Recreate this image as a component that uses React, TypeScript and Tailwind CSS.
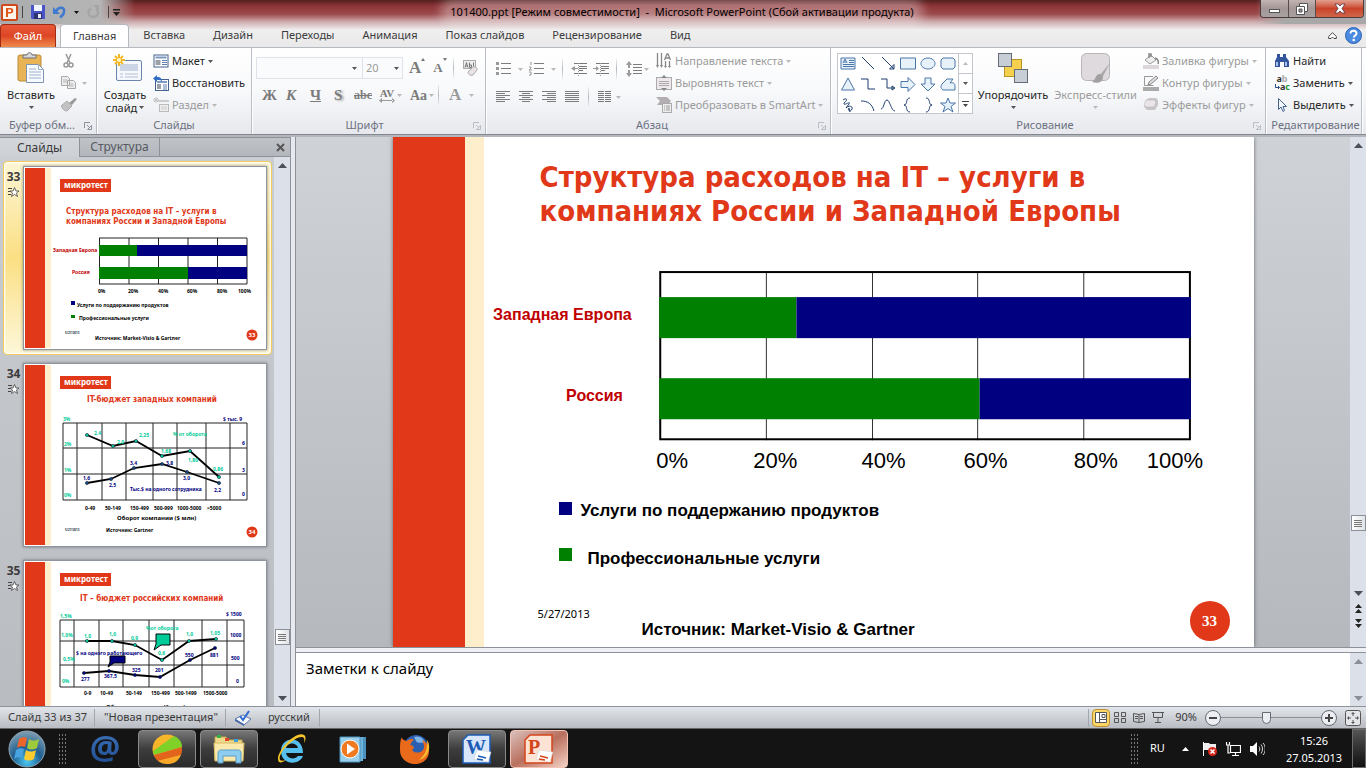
import React, { FC, ReactNode } from 'react'

interface IconProps {
  children: ReactNode
  w?: number
  h?: number
  className?: string
}

const Icon: FC<IconProps> = ({ children, w = 16, h = 16, className = '' }) => (
  <svg width={w} height={h} viewBox={`0 0 ${w} ${h}`} className={`shrink-0 ${className}`} aria-hidden="true">
    {children}
  </svg>
)

const Arrow: FC<{ dim?: boolean }> = ({ dim }) => (
  <Icon w={5} h={3}>
    <path d="M0 0h5L2.500 3z" fill={dim ? '#b9b9b9' : '#555'} />
  </Icon>
)

const Sep: FC = () => (
  <span className="h-5 w-px shrink-0 bg-linear-to-b from-[#eceef1] via-[#b4b8c0] to-[#eceef1]" />
)

/* ---------- title bar and tabs ---------- */

const TitleBar: FC = () => (
  <header className="flex h-6 items-start">
    <div className="flex h-6 items-center pl-px">
      <button aria-label="PowerPoint">
        <Icon w={17} h={17}>
          <rect x="1" y="1" width="15" height="15" rx="1" fill="#fff4ea" stroke="#cc4a1c" strokeWidth="2" />
          <path d="M5 13V4h4.500a2.500 2.500 0 0 1 0 5.500H7V13z" fill="#e0571b" />
          <path d="M7.200 5.500h1.800a1 1 0 0 1 0 2.500H7.200z" fill="#fff" />
        </Icon>
      </button>
      <span className="mr-2 ml-1 h-3 w-px bg-[#444]" />
      <button aria-label="Сохранить">
        <Icon w={14} h={14}>
          <path d="M0 0h14v14H1l-1-1z" fill="#4a52c8" />
          <rect x="3" y="0" width="8" height="6" fill="#f2f5ff" />
          <rect x="3" y="8" width="8" height="6" fill="#2c3170" />
          <rect x="7" y="9" width="3" height="4" fill="#e8ebf8" />
        </Icon>
      </button>
      <button aria-label="Отменить" className="ml-2 flex items-center gap-2">
        <Icon w={13} h={14}>
          <path d="M3 6C6 1 12 2 11 7c-.3 2.500-2 4-4 5.500" fill="none" stroke="#3f7ad0" strokeWidth="2.500" />
          <path d="M0 2v7h7z" fill="#3f7ad0" />
        </Icon>
        <Icon w={5} h={3}>
          <path d="M0 0h5L2.500 3z" fill="#111" />
        </Icon>
      </button>
      <button aria-label="Повторить" className="ml-2">
        <Icon w={13} h={14}>
          <path d="M4 3C0 6 1 12 6 12s7-5 3-8" fill="none" stroke="#a5a5a5" strokeWidth="2.500" />
          <path d="M6 0h6v6z" fill="#a5a5a5" />
        </Icon>
      </button>
      <span className="mr-1 ml-2 h-3 w-px bg-[#444]" />
      <button aria-label="Настройка панели">
        <Icon w={7} h={7}>
          <path d="M0 0h7v1.500H0zM0 3h7L3.500 7z" fill="#222" />
        </Icon>
      </button>
    </div>
    <h1 className="flex h-6 flex-1 items-center justify-center pr-4 text-[11px] text-black">
      <span className="rounded-full bg-white/30 px-1 leading-4 shadow-[0_0_10px_6px_rgba(255,255,255,0.3)]">
        101400.ppt [Режим совместимости]&nbsp; - &nbsp;Microsoft PowerPoint (Сбой активации продукта)
      </span>
    </h1>
    <div className="mr-0.5 flex h-[18px] overflow-hidden rounded-b border border-t-0 border-[#4b3b3b]">
      <button aria-label="Свернуть" className="flex w-7 items-center justify-center border-r border-[#5a4a4a] bg-linear-to-b from-[#c4b4b4] via-[#a59797] to-[#a7a1a1]">
        <Icon w={11} h={10}>
          <rect x="0.500" y="5.500" width="10" height="3" fill="#fff" stroke="#555" />
        </Icon>
      </button>
      <button aria-label="Восстановить окно" className="flex w-[27px] items-center justify-center border-r border-[#5a4a4a] bg-linear-to-b from-[#c4b4b4] via-[#a59797] to-[#a7a1a1]">
        <Icon w={12} h={12}>
          <path d="M3.500.5h8v8h-8z" fill="#fff" stroke="#555" />
          <path d="M.5 3.500h8v8h-8z" fill="#fff" stroke="#555" />
          <path d="M3 6h3v3H3z" fill="#a09494" stroke="#555" />
        </Icon>
      </button>
      <button aria-label="Закрыть" className="flex w-[47px] items-center justify-center bg-linear-to-b from-[#e0a08e] via-[#c8432a] to-[#d0664a]">
        <Icon w={12} h={11}>
          <path d="M1 1h3l2 2 2-2h3L8 5.500l3 4.500H8L6 8l-2 2H1l3-4.500z" fill="#fff" stroke="#534" strokeWidth="0.800" />
        </Icon>
      </button>
    </div>
  </header>
)

const TABS = ['Вставка', 'Дизайн', 'Переходы', 'Анимация', 'Показ слайдов', 'Рецензирование', 'Вид']

const RibbonTabs: FC = () => (
  <nav className="flex h-[23px] items-stretch text-[11px] text-[#3c3c3c]">
    <button className="mr-1 w-14 rounded-t border border-b-0 border-[#a02a12] bg-linear-to-b from-[#e8593a] via-[#dc4524] to-[#f08a4c] text-white">Файл</button>
    <button className="rounded-t-sm border border-b-0 border-[#b5b9c0] bg-white px-3">Главная</button>
    {TABS.map((tab) => (
      <button key={tab} className="px-[14px]">
        {tab}
      </button>
    ))}
    <div className="ml-auto flex items-center gap-2 pr-1">
      <button aria-label="Свернуть ленту">
        <Icon w={9} h={8}>
          <path d="M4.500.7 8.300 4.500v2H6L4.500 5 3 6.500H.7v-2z" fill="#fff" stroke="#444" />
        </Icon>
      </button>
      <button aria-label="Справка">
        <Icon w={17} h={17}>
          <circle cx="8.500" cy="8.500" r="8" fill="#4a8ae0" stroke="#2a62b4" />
          <path d="M5.500 6.500c0-4 6.200-3.600 6 0 0 2-2.700 2-2.700 4" fill="none" stroke="#fff" strokeWidth="2" />
          <circle cx="8.700" cy="13" r="1.300" fill="#fff" />
        </Icon>
      </button>
    </div>
  </nav>
)

/* ---------- ribbon ---------- */

interface GroupProps {
  label: string
  launcher?: 'on' | 'dim'
  className: string
  children: ReactNode
}

const Group: FC<GroupProps> = ({ label, launcher, className, children }) => (
  <section className={`flex flex-col border-r border-[#b9bdc5] shadow-[1px_0_0_#fff] ${className}`}>
    <div className="flex h-[69px] pt-0.5">{children}</div>
    <div className="flex h-[17px] items-center text-[11px] text-[#6c7180]">
      <span className="flex-1 text-center whitespace-nowrap">{label}</span>
      {launcher && (
        <button aria-label={`${label}: параметры`} className="mr-1">
          <Icon w={8} h={8} className={launcher === 'dim' ? 'opacity-50' : ''}>
            <path d="M.5 6V.5H6M3 3l3 3M7.500 3.500v4h-4z" fill="none" stroke="#8a8f99" />
          </Icon>
        </button>
      )}
    </div>
  </section>
)

interface CommandProps {
  icon: ReactNode
  label: string
  dim?: boolean
  arrow?: boolean
}

const Command: FC<CommandProps> = ({ icon, label, dim, arrow }) => (
  <button className={`flex h-[22px] items-center gap-[3px] text-[11px] whitespace-nowrap ${dim ? 'text-[#9b9b9b]' : 'text-[#262626]'}`}>
    {icon}
    {label}
    {arrow && <Arrow dim={dim} />}
  </button>
)

const Clipboard: FC = () => (
  <Group label="Буфер обм..." launcher="on" className="w-[97px]">
    <button className="flex w-[58px] flex-col items-center justify-start pl-1 text-[11px] text-[#262626]">
      <Icon w={30} h={32} className="mt-0.5 mb-[3px]">
        <rect x="2" y="3" width="23" height="26" rx="2" fill="#e8b456" stroke="#b98a36" />
        <path d="M7 6V3h4c0-3 5-3 5 0h4v3z" fill="#d5d8dc" stroke="#6c7075" />
        <path d="M10.500 12.500h12l5 5v13h-17z" fill="#f7faff" stroke="#7f93b5" />
        <path d="M22.500 12.500v5h5M13 17h7M13 20h12M13 23h12M13 26h12" fill="none" stroke="#9fb0cc" />
      </Icon>
      <span className="leading-4">Вставить</span>
      <span className="flex h-2 items-center">
        <Arrow />
      </span>
    </button>
    <div className="flex flex-col">
      <button aria-label="Вырезать" className="flex h-[22px] items-center pl-1">
        <Icon w={14}>
          <path d="M4 1l4 9M9 1L5 10" stroke="#999" strokeWidth="1.500" fill="none" />
          <circle cx="4" cy="12" r="2" fill="none" stroke="#999" strokeWidth="1.500" />
          <circle cx="9" cy="12" r="2" fill="none" stroke="#999" strokeWidth="1.500" />
        </Icon>
      </button>
      <button aria-label="Копировать" className="flex h-[22px] items-center gap-[5px] pl-[3px]">
        <Icon>
          <path d="M.5 1.500h6l2 2v7h-8zM6.500 5.500h6l2 2v6h-8z" fill="#eee" stroke="#a9a9a9" />
          <path d="M2 5h4M2 7h4M8.500 9h4M8.500 11h4" stroke="#b5b5b5" />
        </Icon>
        <Arrow dim />
      </button>
      <button aria-label="Формат по образцу" className="flex h-[22px] items-center pl-[3px]">
        <Icon>
          <path d="M0 9l6-5 5 5-5 5c-2 0-4-1-6-5z" fill="#c2c2c2" stroke="#aaa" />
          <path d="M8 6l6-5 2 1-5 6z" fill="#999" />
        </Icon>
      </button>
    </div>
  </Group>
)

const LayoutIcon: FC = () => (
  <Icon w={16} h={14}>
    <rect x="1" y="1" width="14" height="12" fill="#fff" stroke="#45618c" />
    <rect x="2.500" y="2.500" width="11" height="2" fill="#7d9ac4" />
    <rect x="2.500" y="6" width="5" height="5" fill="#9a9fa8" />
    <path d="M9 6.500h5M9 8.500h5M9 10.500h5" stroke="#5f7fb2" />
  </Icon>
)

const Slides: FC = () => (
  <Group label="Слайды" className="w-[155px]">
    <button className="flex w-[56px] flex-col items-center justify-start text-[11px] text-[#262626]">
      <Icon w={32} h={32} className="mt-0.5 mb-1 ml-1">
        <rect x="5.500" y="8.500" width="25" height="20" rx="1.500" fill="#f4f7fc" stroke="#6d84ac" />
        <rect x="9" y="12" width="18" height="7" fill="#ccd5e6" />
        <path d="M9 22h3M14 22h13M9 25h3M14 25h13" stroke="#b6c0d2" />
        <path d="M8 2v12M2 8h12M4 4l8 8M12 4l-8 8" stroke="#f3b724" strokeWidth="2" />
        <circle cx="8" cy="8" r="2" fill="#fff6c8" />
      </Icon>
      <span className="leading-[13px]">Создать</span>
      <span className="flex items-center gap-0.5 leading-[13px]">
        слайд <Arrow />
      </span>
    </button>
    <div className="flex flex-col">
      <Command icon={<LayoutIcon />} label="Макет" arrow />
      <Command
        icon={
          <Icon>
            <rect x="2.500" y="4.500" width="13" height="11" fill="#fff" stroke="#45618c" />
            <path d="M4 7h10" stroke="#7d9ac4" strokeWidth="2" />
            <rect x="4" y="9" width="4" height="5" fill="#9a9fa8" />
            <path d="M10 10h4M10 12h4M10 14h4" stroke="#5f7fb2" />
            <path d="M0 3.500L4 0v2c4 0 5 2 5 5C8 5 7 5 4 5v2z" fill="#2f6cc4" />
          </Icon>
        }
        label="Восстановить"
      />
      <Command
        icon={
          <Icon>
            <rect x="6.500" y="7.500" width="9" height="7" fill="#eee" stroke="#bbb" />
            <rect x="5" y="3" width="11" height="2" fill="#ccc" />
            <path d="M8 10h6M8 12h6" stroke="#ccc" />
            <path d="M3 0v6M0 3h6M1 1l4 4M5 1L1 5" stroke="#c4c4c4" />
          </Icon>
        }
        label="Раздел"
        dim
        arrow
      />
    </div>
  </Group>
)

const FONT_BTN = 'flex h-6 items-center font-["Liberation_Serif",serif] font-bold text-[#7b7b7b]'

const FontGroup: FC = () => (
  <Group label="Шрифт" launcher="dim" className="w-[234px] pl-1">
    <div className="flex flex-col gap-1 pt-[7px]">
      <div className="flex items-center">
        <label className="grid w-[107px] items-center">
          <select aria-label="Шрифт" className="col-start-1 row-start-1 h-[22px] appearance-none border border-[#dfe2e8] bg-[#fafbfc]" />
          <span className="col-start-1 row-start-1 mr-1.5 justify-self-end">
            <Arrow />
          </span>
        </label>
        <label className="grid w-10 items-center">
          <select aria-label="Размер шрифта" className="col-start-1 row-start-1 h-[22px] appearance-none border border-l-0 border-[#dfe2e8] bg-[#fafbfc] pl-[3px] text-[11px] text-[#9b9b9b]">
            <option>20</option>
          </select>
          <span className="col-start-1 row-start-1 mr-1 justify-self-end">
            <Arrow />
          </span>
        </label>
        <button aria-label="Увеличить размер шрифта" className='ml-[6px] flex items-start font-["Liberation_Serif",serif] text-[17px] leading-5 font-bold text-[#7b7b7b]'>
          A
          <Icon w={4} h={4}>
            <path d="M0 3h4L2 0z" fill="#777" />
          </Icon>
        </button>
        <button aria-label="Уменьшить размер шрифта" className='ml-2 flex items-start font-["Liberation_Serif",serif] text-[13px] leading-5 font-bold text-[#7b7b7b]'>
          A
          <Icon w={4} h={4}>
            <path d="M0 0h4L2 3z" fill="#777" />
          </Icon>
        </button>
        <span className="w-1.5" />
        <Sep />
        <button aria-label="Очистить форматирование" className="ml-2">
          <Icon>
            <rect x="1.500" y=".5" width="12" height="8" fill="#eee" stroke="#aaa" />
            <path d="M3 7.500l1.500-5 1.500 5M3.500 6h2M7.500 2.500v5h2v-2.500h-2M11.500 2.500v5" fill="none" stroke="#777" />
            <path d="M6 12l5-5c2-1 5 1 4 3l-4 5c-3 1-5-1-5-3z" fill="#e9e2e6" stroke="#aaa" />
          </Icon>
        </button>
      </div>
      <div className="flex items-center pl-[6px]">
        <button className={`${FONT_BTN} w-6 text-[15px]`}>Ж</button>
        <button className={`${FONT_BTN} w-6 text-[15px] italic`}>К</button>
        <button className={`${FONT_BTN} w-6 text-[15px] underline`}>Ч</button>
        <button className={`${FONT_BTN} w-5 text-[15px] [text-shadow:2px_1px_2px_#aaa]`}>S</button>
        <button className={`${FONT_BTN} w-[25px] text-[12px] line-through`}>abc</button>
        <button aria-label="Межзнаковый интервал" className={`${FONT_BTN} w-[31px] gap-0.5`}>
          <span className="flex flex-col items-center text-[11px] leading-[10px]">
            AV
            <Icon h={5}>
              <path d="M0 2.500L3 0v5zM16 2.500L13 0v5zM2 2h12v1H2z" fill="#999" />
            </Icon>
          </span>
          <Arrow dim />
        </button>
        <button className={`${FONT_BTN} w-7 gap-0.5 text-[14px]`}>
          Aa <Arrow dim />
        </button>
        <Sep />
        <button className={`${FONT_BTN} ml-[10px] gap-2 text-[17px] text-[#999]`}>
          A <Arrow dim />
        </button>
      </div>
    </div>
  </Group>
)

const Align: FC<{ d: string; label: string }> = ({ d, label }) => (
  <button aria-label={label} className="mr-[9px] flex h-6 items-center">
    <Icon w={14} h={12}>
      <path d={d} stroke="#7d7d7d" />
    </Icon>
  </button>
)

const Indent: FC<{ label: string; d: string }> = ({ label, d }) => (
  <button aria-label={label}>
    <Icon h={13}>
      <path d="M3 .5h13M8 3.500h8M8 5.500h8M8 7.500h4M3 10.500h13" stroke="#777" />
      <path d="M7.500 0v13" stroke="#999" strokeDasharray="1 1" />
      <path d={d} fill="#999" />
    </Icon>
  </button>
)

const Paragraph: FC = () => (
  <Group label="Абзац" launcher="dim" className="w-[345px]">
    <div className="flex w-[170px] flex-col gap-1 pt-[7px] pl-[10px]">
      <div className="flex h-6 items-center">
        <button aria-label="Маркеры" className="flex w-[33px] items-center gap-[6px]">
          <Icon h={14}>
            <path d="M5 1.500h10M5 6.500h10M5 11.500h10" stroke="#7d7d7d" />
            <path d="M0 0h3v3H0zM0 5h3v3H0zM0 10h3v3H0z" fill="#999" />
          </Icon>
          <Arrow dim />
        </button>
        <button aria-label="Нумерация" className="flex w-[33px] items-center gap-[6px]">
          <Icon h={14}>
            <path d="M5 1.500h10M5 6.500h10M5 11.500h10" stroke="#7d7d7d" />
            <path d="M1 0h1v3M0 5h2v1L0 8h3M0 10h2v3H0" stroke="#999" fill="none" />
          </Icon>
          <Arrow dim />
        </button>
        <Sep />
        <div className="flex w-[53px] justify-center gap-[6px]">
          <Indent label="Уменьшить уровень" d="M0 5.500L4 3v2h3v1H4v2z" />
          <Indent label="Увеличить уровень" d="M6 5.500L3 3v2H0v1h3v2z" />
        </div>
        <Sep />
        <button aria-label="Междустрочный интервал" className="ml-[9px] flex items-center gap-0.5">
          <Icon>
            <path d="M3 0l3 4H4v3H2V4H0zM3 16l3-4H4V9H2v3H0z" fill="#999" />
            <path d="M7 3.500h9M7 6.500h9M7 9.500h9M7 12.500h9" stroke="#7d7d7d" />
          </Icon>
          <Arrow dim />
        </button>
      </div>
      <div className="flex items-center">
        <Align label="По левому краю" d="M0 .5h14M0 2.500h9M0 4.500h14M0 6.500h9M0 8.500h14M0 10.500h9" />
        <Align label="По центру" d="M0 .5h14M3 2.500h8M0 4.500h14M3 6.500h8M0 8.500h14M3 10.500h8" />
        <Align label="По правому краю" d="M0 .5h14M5 2.500h9M0 4.500h14M5 6.500h9M0 8.500h14M5 10.500h9" />
        <Align label="По ширине" d="M0 .5h14M0 2.500h14M0 4.500h14M0 6.500h14M0 8.500h14M0 10.500h14" />
        <Sep />
        <button aria-label="Колонки" className="ml-[9px] flex items-center gap-[5px]">
          <Icon w={13} h={12}>
            <path d="M0 .5h6M0 2.500h6M0 4.500h6M0 6.500h6M0 8.500h6M0 10.500h6M7 .5h6M7 2.500h6M7 4.500h6M7 6.500h6M7 8.500h6M7 10.500h6" stroke="#777" />
          </Icon>
          <Arrow dim />
        </button>
      </div>
    </div>
    <div className="flex flex-col">
      <Command
        icon={
          <Icon>
            <path d="M1.500 0v13M5.500 0v13M9.500 8v6M13.500 8v6" stroke="#888" strokeWidth="1.300" />
            <path d="M0 12h3l-1.500 3zM4 12h3l-1.500 3zM8 13h3l-1.500 2zM12 13h3l-1.500 2z" fill="#888" />
            <path d="M8.500 7l2.500-6h1l2.500 6M9.500 5h4" stroke="#888" fill="none" strokeWidth="1.300" />
          </Icon>
        }
        label="Направление текста"
        dim
        arrow
      />
      <Command
        icon={
          <Icon>
            <rect x=".5" y="2.500" width="15" height="12" fill="#eee7ec" stroke="#aaa" />
            <path d="M3 6.500h10M3 8.500h10M3 10.500h10" stroke="#aaa" />
            <path d="M8 0l3 3H5zM8 16l3-3H5z" fill="#888" />
          </Icon>
        }
        label="Выровнять текст"
        dim
        arrow
      />
      <Command
        icon={
          <Icon>
            <path d="M0 0h11l4 4-3 4H1l3-4z" fill="#b3aeb2" />
            <rect x="6.500" y="6.500" width="9" height="9" fill="#eee" stroke="#aaa" />
            <path d="M8 9h1M10 9h4M8 11h1M10 11h4M8 13h1M10 13h4" stroke="#999" />
          </Icon>
        }
        label="Преобразовать в SmartArt"
        dim
        arrow
      />
    </div>
  </Group>
)

const SHAPES: { name: string; d: string; filled?: boolean }[] = [
  { name: 'Надпись', d: 'M1 3h14v11H1zM9 5.500h5M9 7.500h5M3 9.500h11M3 11.500h11M3 8l2-4 2 4M4 7h2', filled: true },
  { name: 'Линия', d: 'M2 2l12 12' },
  { name: 'Стрелка', d: 'M2 2l12 12M14 9.500V14H9.500z' },
  { name: 'Прямоугольник', d: 'M.5 3h15v11H.5z', filled: true },
  { name: 'Овал', d: 'M8 3c4 0 7 2.500 7 5.500S12 14 8 14s-7-2.500-7-5.500S4 3 8 3z', filled: true },
  { name: 'Скругленный прямоугольник', d: 'M3 3h10l2 2v7l-2 2H3l-2-2V5z', filled: true },
  { name: 'Треугольник', d: 'M8 2l6.500 12h-13z', filled: true },
  { name: 'Соединитель', d: 'M1 3h7v10h7' },
  { name: 'Соединитель со стрелкой', d: 'M1 3h6v9h7M12 10l3 2-3 2z' },
  { name: 'Стрелка вправо', d: 'M1 5.500h7v-4L15 8.500l-7 7v-4H1z', filled: true },
  { name: 'Стрелка вниз', d: 'M5 2h6v6h4l-7 7-7-7h4z', filled: true },
  { name: 'Полилиния', d: 'M2 8l5-5h6l-3 4c4-1 5 1 5 3v4H3c-3-2-2-4-1-6z', filled: true },
  { name: 'Кривая', d: 'M3 3c4-3 5 0 1 3-1 4 7-3 5 1l-3 4c3-3 7-2 6 1s-5 2-3-1l1 4' },
  { name: 'Дуга', d: 'M1 4c7 0 11 3 13 10' },
  { name: 'Линия кривая', d: 'M1 12C4 12 4 3 7 3s4 11 8 11' },
  { name: 'Левая фигурная скобка', d: 'M10 1C5 1 8 8 4 8c4 0 1 7 6 7' },
  { name: 'Правая фигурная скобка', d: 'M6 1c5 0 2 7 6 7-4 0-1 7-6 7' },
  { name: 'Звезда', d: 'M8 1l2 5h5.500l-4.500 3.500 2 5.500-5-3.500L3 15l2-5.500L.5 6H6z', filled: true },
]

const Drawing: FC = () => (
  <Group label="Рисование" launcher="dim" className="flex-1 pl-[6px]">
    <div className="mt-[3px] flex h-[61px] shrink-0 border border-[#c3c6cd] bg-white">
      <div className="grid grid-cols-6 gap-x-1 gap-y-1 px-0.5 pt-px">
        {SHAPES.map((shape) => (
          <button key={shape.name} aria-label={shape.name}>
            <Icon>
              <path d={shape.d} fill={shape.filled ? '#e6f1fa' : 'none'} stroke={shape.filled ? '#4a76a8' : '#1f3d70'} />
            </Icon>
          </button>
        ))}
      </div>
      <div className="flex w-[14px] flex-col border-l border-[#c3c6cd]">
        <button aria-label="Вверх" className="flex flex-1 items-center justify-center">
          <Icon w={5} h={3}>
            <path d="M0 3h5L2.500 0z" fill="#bbb" />
          </Icon>
        </button>
        <button aria-label="Вниз" className="flex flex-1 items-center justify-center border-y border-[#c3c6cd]">
          <Arrow />
        </button>
        <button aria-label="Все фигуры" className="flex flex-1 items-center justify-center">
          <Icon w={7} h={6}>
            <path d="M0 0h7v1H0zM1 3h5L3.500 6z" fill="#444" />
          </Icon>
        </button>
      </div>
    </div>
    <button className="flex w-20 shrink-0 flex-col items-center justify-start text-[11px] text-[#262626]">
      <Icon w={32} h={32} className="mt-0.5 mb-[3px]">
        <rect x="7.500" y="7.500" width="17" height="17" fill="#f5cf4e" stroke="#b99429" />
        <rect x="1.500" y="1.500" width="13" height="13" fill="#c8ced6" stroke="#666c75" />
        <rect x="17.500" y="17.500" width="13" height="13" fill="#c8ced6" stroke="#666c75" />
      </Icon>
      <span className="leading-4">Упорядочить</span>
      <span className="flex h-2 items-center">
        <Arrow />
      </span>
    </button>
    <button className="flex w-[85px] shrink-0 flex-col items-center justify-start text-[11px] text-[#9b9b9b]">
      <Icon w={32} h={32} className="mt-0.5 mb-[3px]">
        <rect x="1.500" y="1.500" width="28" height="27" rx="5" fill="#dfdade" stroke="#b9b4b8" />
        <path d="M30 11L19 24l3 2z" fill="#aaa" />
        <path d="M20 22c-5 0-4 6-8 8 6 2 11 0 11-5z" fill="#a3a0a2" />
      </Icon>
      <span className="leading-4">Экспресс-стили</span>
      <span className="flex h-2 items-center">
        <Arrow dim />
      </span>
    </button>
    <div className="ml-[5px] flex flex-col">
      <Command
        icon={
          <Icon>
            <rect x="0" y="12" width="16" height="4" fill="#ddd6dc" />
            <path d="M2 7l6-5 5 5-6 4z" fill="#eee" stroke="#999" />
            <path d="M6 5V1h2v3M12 5c3 1 4 3 3 6" fill="none" stroke="#888" strokeWidth="1.500" />
          </Icon>
        }
        label="Заливка фигуры"
        dim
        arrow
      />
      <Command
        icon={
          <Icon>
            <rect x="0" y="12" width="16" height="4" fill="#aaa" />
            <path d="M10 1.500H1.500v9h9" fill="none" stroke="#999" />
            <path d="M5 10l1-3 7-6 2 2-7 6z" fill="#ddd" stroke="#888" />
          </Icon>
        }
        label="Контур фигуры"
        dim
        arrow
      />
      <Command
        icon={
          <Icon>
            <path d="M3 3l3-2h7l2 2v5l-3 5H4l-3-3z" fill="#c9c5c8" />
            <path d="M3 3h8l2 2-2 5H3L1 8z" fill="#e9e5e8" stroke="#bbb" strokeWidth=".6" />
          </Icon>
        }
        label="Эффекты фигур"
        dim
        arrow
      />
    </div>
  </Group>
)

const Editing: FC = () => (
  <Group label="Редактирование" className="mr-1 w-24 pl-1">
    <div className="flex flex-col pl-1">
      <Command
        icon={
          <Icon>
            <path d="M3 1h3v3h3V1h3v3l3 4v6h-5V9H6v5H1V8l2-4z" fill="#32559c" />
            <path d="M2 9h2v4H2zM11 9h2v4h-2z" fill="#a9c0e8" />
          </Icon>
        }
        label="Найти"
      />
      <Command
        icon={
          <span className="flex w-4 shrink-0 flex-col text-[9px] leading-2 font-bold">
            <span className="text-[#333]">
              a<span className="text-[#aaa]">b</span>
            </span>
            <span className="flex items-center justify-end text-[#333]">
              <Icon w={5} h={6}>
                <path d="M.5 0v3.500h4M3 2l1.500 1.500L3 5" stroke="#2b4b86" fill="none" />
              </Icon>
              a<span className="text-[#1f9b2d]">c</span>
            </span>
          </span>
        }
        label="Заменить"
        arrow
      />
      <Command
        icon={
          <Icon>
            <path d="M4.500 1.500v11L7 10l2 4.500 1.500-1L9 9.500h3.500z" fill="#f4f8ff" stroke="#47648f" />
          </Icon>
        }
        label="Выделить"
        arrow
      />
    </div>
  </Group>
)

/* ---------- thumbnails ---------- */

const THUMB_TITLE = 'font-["DejaVu_Sans_Condensed","DejaVu_Sans",sans-serif]'

const ThumbFrame: FC<{ n: number; children: ReactNode }> = ({ n, children }) => (
  <svg viewBox="0 0 242 182" className="block w-full font-['Noto_Sans',sans-serif]" role="img" aria-label={`Слайд ${n}`}>
    <rect width="242" height="182" fill="#fff" />
    <rect x="1" y="1" width="20" height="180" fill="#e03818" />
    <rect x="21" y="1" width="6" height="180" fill="#feeecb" />
    <rect x="36" y="12" width="51" height="13" fill="#e03818" />
    <text x="40" y="21" fontSize="8" fontWeight="bold" fill="#fff">микротест</text>
    {children}
    <text x="41" y="167" fontSize="3" fontWeight="bold" fill="#234">5/27/2013</text>
    <circle cx="228" cy="168" r="5.500" fill="#e03818" />
    <text x="228" y="170" fontSize="6" fontWeight="bold" fill="#fff" textAnchor="middle">{n}</text>
  </svg>
)

type Label = [x: number, y: number, text: string]
type Point = [x: number, y: number]

const Labels: FC<{ items: Label[]; fill: string }> = ({ items, fill }) => (
  <g fontSize="5" fontWeight="bold" fill={fill}>
    {items.map(([x, y, text]) => (
      <text key={`${x}-${y}`} x={x} y={y}>
        {text}
      </text>
    ))}
  </g>
)

const Line: FC<{ points: Point[]; fill: string }> = ({ points, fill }) => (
  <g>
    <polyline points={points.map((p) => p.join(',')).join(' ')} fill="none" stroke="#000" strokeWidth="1.800" />
    {points.map(([x, y]) => (
      <circle key={x} cx={x} cy={y} r="1.600" fill={fill} stroke="#123" strokeWidth=".6" />
    ))}
  </g>
)

const GREEN = '#00cc99'
const NAVY = '#000080'

const Thumb33: FC = () => (
  <ThumbFrame n={33}>
    <g fontSize="8" fontWeight="bold" fill="#e03818" className={THUMB_TITLE}>
      <text x="42" y="47">Структура расходов на IT – услуги в</text>
      <text x="42" y="57">компаниях России и Западной Европы</text>
    </g>
    <path d="M75.500 71v46M105 71v46M134.500 71v46M164 71v46M193.500 71v46M223 71v46M75 71h148M75 117h148" stroke="#222" />
    <path d="M75 78h38v11H75zM75 100h89v12H75z" fill="#008000" />
    <path d="M113 78h110v11H113zM164 100h59v12h-59z" fill={NAVY} />
    <Labels fill="#c00000" items={[[29, 85, 'Западная Европа'], [48, 107, 'Россия']]} />
    <Labels fill="#000" items={[[74, 126, '0%'], [104, 126, '20%'], [134, 126, '40%'], [163, 126, '60%'], [193, 126, '80%'], [214, 126, '100%'], [53, 140, 'Услуги по поддержанию продуктов'], [55, 153, 'Профессиональные услуги'], [71, 173, 'Источник: Market-Visio & Gartner']]} />
    <rect x="47" y="134" width="4" height="4" fill={NAVY} />
    <rect x="47" y="148" width="4" height="3" fill="#008000" />
  </ThumbFrame>
)

const Thumb34: FC = () => (
  <ThumbFrame n={34}>
    <text x="63" y="38" fontSize="8" fontWeight="bold" fill="#e03818" className={THUMB_TITLE}>IT-бюджет западных компаний</text>
    <path d="M39 59h184M39 84h184M39 110h184M39 136h184M39 59v77M53 59v77M78 59v77M102 59v77M129 59v77M153 59v77M182 59v77M206 59v77M223 59v77" stroke="#222" />
    <Line fill={GREEN} points={[[63, 71], [89, 82], [112, 77], [138, 92], [166, 87], [195, 113]]} />
    <Line fill="#1b4a80" points={[[63, 119], [87, 115], [110, 104], [138, 100], [163, 108], [195, 119]]} />
    <Labels fill={GREEN} items={[[39, 57, '3%'], [40, 82, '2%'], [40, 108, '1%'], [40, 133, '0%'], [70, 71, '2,4'], [93, 80, '2,0'], [115, 73, '2,25'], [137, 89, '1,68'], [164, 98, '1,80'], [189, 107, '0,86'], [149, 72, '% от оборота']]} />
    <Labels fill={NAVY} items={[[199, 57, '$ тыс. 9'], [218, 81, '6'], [218, 108, '3'], [218, 132, '0'], [59, 116, '1,6'], [85, 123, '2,5'], [106, 101, '3,4'], [142, 101, '3,8'], [159, 116, '3,0'], [190, 128, '2,2'], [106, 127, 'Тыс.$ на одного сотрудника']]} />
    <Labels fill="#000" items={[[61, 146, '0-49'], [81, 146, '50-149'], [106, 146, '150-499'], [130, 146, '500-999'], [153, 146, '1000-5000'], [183, 146, '>5000'], [82, 168, 'Источник: Gartner']]} />
    <text x="93" y="156" fontSize="6" fontWeight="bold">Оборот компании ($ млн)</text>
  </ThumbFrame>
)

const Thumb35: FC = () => (
  <ThumbFrame n={35}>
    <text x="56" y="40" fontSize="8" fontWeight="bold" fill="#e03818" className={THUMB_TITLE}>IT – бюджет российских компаний</text>
    <path d="M36 59h184M36 80h184M36 104h184M36 126h184M36 59v67M50 59v67M75 59v67M99 59v67M125 59v67M150 59v67M178 59v67M203 59v67M220 59v67" stroke="#222" />
    <path d="M132 73h14v11h-9l-7 5 2-6z" fill={GREEN} stroke="#000" strokeLinejoin="round" />
    <path d="M86 95h15v7h-11l-6 4 2-5z" fill={NAVY} stroke="#000" strokeLinejoin="round" />
    <Line fill={GREEN} points={[[63, 80], [88, 80], [111, 84], [138, 99], [165, 80], [192, 78]]} />
    <Line fill={NAVY} points={[[60, 112], [85, 110], [111, 114], [136, 116], [166, 99], [191, 87]]} />
    <Labels fill={GREEN} items={[[36, 57, '1,5%'], [37, 76, '1,0%'], [39, 100, '0,5%'], [38, 122, '0%'], [60, 77, '1,0'], [85, 75, '1,0'], [107, 79, '0,9'], [134, 94, '0,6'], [162, 75, '1,0'], [186, 74, '1,05'], [122, 69, '%от оборота']]} />
    <Labels fill={NAVY} items={[[202, 55, '$ 1500'], [206, 76, '1000'], [207, 99, '500'], [212, 122, '0'], [57, 120, '277'], [80, 117, '367,5'], [108, 111, '325'], [131, 111, '201'], [161, 96, '550'], [186, 96, '881'], [52, 94, '$ на одного работающего']]} />
    <Labels fill="#000" items={[[60, 134, '0-9'], [76, 134, '10-49'], [102, 134, '50-149'], [127, 134, '150-499'], [151, 134, '500-1499'], [179, 134, '1500-5000']]} />
    <text x="82" y="148" fontSize="6" fontWeight="bold">Оборот компании ($ млн)</text>
  </ThumbFrame>
)

const THUMBS = [
  { n: 33, view: <Thumb33 /> },
  { n: 34, view: <Thumb34 /> },
  { n: 35, view: <Thumb35 /> },
]

interface ScrollProps {
  className?: string
  thumb?: string
  children?: ReactNode
}

const ScrollBar: FC<ScrollProps> = ({ className = '', thumb, children }) => (
  <div className={`flex w-4 shrink-0 flex-col items-center bg-[#dce0e9] ${className}`}>
    <button aria-label="Прокрутить вверх" className="flex h-4 items-center">
      <Icon w={9} h={5}>
        <path d="M0 5h9L4.500 0z" fill={thumb ? '#4c5158' : '#8b9098'} />
      </Icon>
    </button>
    {thumb ? <span className={thumb} /> : null}
    {thumb ? (
      <span className="flex h-4 w-[15px] flex-col items-center justify-center gap-px border border-[#8b9098] bg-linear-to-r from-white to-[#dfe2e7]">
        <i className="h-px w-2 bg-[#777]" />
        <i className="h-px w-2 bg-[#777]" />
        <i className="h-px w-2 bg-[#777]" />
        <i className="h-px w-2 bg-[#777]" />
      </span>
    ) : null}
    <span className="flex-1" />
    <button aria-label="Прокрутить вниз" className="flex h-4 items-center">
      <Icon w={9} h={5}>
        <path d="M0 0h9L4.500 5z" fill={thumb ? '#4c5158' : '#8b9098'} />
      </Icon>
    </button>
    {children}
  </div>
)

const SlidePane: FC = () => (
  <aside className="flex w-[291px] shrink-0 flex-col border-r border-[#8d929a]">
    <div className="flex h-5 shrink-0 items-stretch border-t border-[#8d929a] bg-linear-to-b from-[#bfc3c8] to-[#b3b7bd] text-[12px]">
      <button className="w-[79px] bg-linear-to-b from-[#d3d7dc] to-[#cdd1d6] text-[#3a3a3a]">Слайды</button>
      <button className="w-[81px] border border-t-0 border-[#8d929a] text-[#55585e]">Структура</button>
      <span className="flex-1 border-b border-[#8d929a]" />
      <button aria-label="Закрыть область" className="border-b border-[#8d929a] pr-[5px]">
        <Icon w={9} h={9}>
          <path d="M1 1l7 7M8 1L1 8" stroke="#555" strokeWidth="2" />
        </Icon>
      </button>
    </div>
    <div className="flex min-h-0 flex-1 bg-linear-to-b from-[#cacdd2] to-[#b9bdc2]">
      <ol className="flex min-w-0 flex-1 flex-col gap-[3px] overflow-hidden pt-1 pr-[2px] pl-[3px]">
        {THUMBS.map(({ n, view }) => (
          <li key={n} className="shrink-0">
            <button
              className={`flex w-full rounded-sm border py-1 pr-[4px] text-left ${n === 33 ? 'border-[#f2cb58] bg-linear-to-b from-[#fdf6d4] via-[#fbdf83] to-[#fdf7d8] shadow-[inset_0_0_2px_1px_#fff]' : 'border-transparent'}`}
            >
              <span className="flex w-[19px] shrink-0 flex-col items-center gap-1 pt-[5px] text-[12px] leading-3 font-bold text-[#3c3c3c]">
                {n}
                <Icon w={11} h={10}>
                  <path d="M6.500.5L8 4h3L8.500 6l1 3.500-3-2-3 2 1-3.500L2 4h3z" fill="#fff" stroke="#444" strokeWidth=".8" />
                  <path d="M0 1.500h4M0 4.500h2M0 7.500h3" stroke="#444" />
                </Icon>
              </span>
              <span className="min-w-0 flex-1 border border-[#8f959e] shadow-[0_0_3px_rgba(0,0,0,0.4)]">{view}</span>
            </button>
          </li>
        ))}
      </ol>
      <ScrollBar thumb="h-[456px]" />
    </div>
  </aside>
)

/* ---------- slide ---------- */

const BARS = [
  { name: 'Западная Европа', x: 493, y: 297, split: 796 },
  { name: 'Россия', x: 566, y: 378, split: 979 },
]
const TICKS: Label[] = [
  [656, 468, '0%'],
  [753, 468, '20%'],
  [861, 468, '40%'],
  [963, 468, '60%'],
  [1073, 468, '80%'],
  [1146, 468, '100%'],
]

const Slide: FC = () => (
  <article className='mx-auto flex w-[861px] shrink-0 bg-white font-["Liberation_Sans",sans-serif] shadow-[0_0_4px_rgba(0,0,0,0.5)]'>
    <div className="w-[72px] shrink-0 bg-[#e03818]" />
    <div className="w-[19px] shrink-0 bg-[#feeecb]" />
    <div className="flex flex-1 flex-col text-[17px] font-bold text-black">
      <h2 className='mt-[23px] pl-14 font-["DejaVu_Sans_Condensed","DejaVu_Sans",sans-serif] text-[29px] leading-[34px] whitespace-nowrap text-[#e03818]'>
        Структура расходов на IT – услуги в
        <br />
        компаниях России и Западной Европы
      </h2>
      <svg viewBox="484 228 769 256" className="block w-full" role="img" aria-label="Диаграмма расходов">
        <path d="M766 272v168M872 272v168M977 272v168M1083 272v168" stroke="#333" />
        <rect x="660" y="272" width="529" height="167" fill="none" stroke="#000" strokeWidth="2" />
        {BARS.map((bar) => (
          <g key={bar.name}>
            <rect x="659" y={bar.y} width={bar.split - 659} height="41" fill="#008000" />
            <rect x={bar.split} y={bar.y} width={1190 - bar.split} height="41" fill="#000080" />
            <text x={bar.x} y={bar.y + 23} fontSize="16" fill="#c00000">
              {bar.name}
            </text>
          </g>
        ))}
        <g fontSize="22" fontWeight="normal">
          {TICKS.map(([x, y, text]) => (
            <text key={text} x={x} y={y}>
              {text}
            </text>
          ))}
        </g>
      </svg>
      <ul className="flex flex-col gap-6 pt-[14px] pl-[75px]">
        <li className="flex h-6 items-center gap-[9px]">
          <span className="mb-1 size-[13px] bg-[#000080]" />
          Услуги по поддержанию продуктов
        </li>
        <li className="flex h-6 items-center gap-4">
          <span className="mb-2 size-[13px] bg-[#008000]" />
          Профессиональные услуги
        </li>
      </ul>
      <footer className="flex items-start pt-[31px] pl-[54px]">
        <time className='w-[104px] pt-[5px] font-["Noto_Sans",sans-serif] text-[11px] leading-4 font-normal'>5/27/2013</time>
        <span className="flex-1 pt-[19px] leading-5">Источник: Market-Visio &amp; Gartner</span>
        <span className='mr-6 flex size-10 items-center justify-center rounded-full bg-[#e03818] font-["Liberation_Serif",serif] text-[15px] text-white'>33</span>
      </footer>
    </div>
  </article>
)

const DoubleArrow: FC<{ label: string; d: string }> = ({ label, d }) => (
  <button aria-label={label} className="flex h-[15px] items-center">
    <Icon w={7} h={9}>
      <path d={d} fill="#222" />
    </Icon>
  </button>
)

const Workspace: FC = () => (
  <main className="ml-1 flex min-w-0 flex-1 flex-col border-l border-[#8d929a]">
    <div className="flex min-h-0 flex-1 overflow-hidden bg-[#b7bbc0]">
      <div className="flex min-w-0 flex-1 overflow-hidden bg-linear-to-b from-[#cfd2d7] to-[#b5b9be]">
        <Slide />
      </div>
      <ScrollBar thumb="h-[362px]" className="pb-4">
        <DoubleArrow label="Предыдущий слайд" d="M0 4h7L3.500 0zM0 9h7L3.500 5z" />
        <DoubleArrow label="Следующий слайд" d="M0 0h7L3.500 4zM0 5h7L3.500 9z" />
      </ScrollBar>
    </div>
    <div className="h-[6px] shrink-0 border-y border-[#8d929a] bg-[#eef0f4]" />
    <div className="flex h-[53px] shrink-0 bg-white">
      <textarea aria-label="Заметки" defaultValue="Заметки к слайду" className="flex-1 resize-none px-[10px] pt-[3px] text-[15px] leading-6 text-black outline-none" />
      <ScrollBar />
    </div>
  </main>
)

/* ---------- status bar ---------- */

const ViewButton: FC<{ label: string; d: string; active?: boolean }> = ({ label, d, active }) => (
  <button
    aria-label={label}
    className={`flex h-[18px] w-[18px] items-center justify-center rounded-sm ${active ? 'border border-[#c09030] bg-[#fcd667]' : ''}`}
  >
    <Icon w={12} h={11}>
      <path d={d} fill={active ? '#fff' : 'none'} stroke="#555" />
    </Icon>
  </button>
)

const ZoomButton: FC<{ label: string; d: string }> = ({ label, d }) => (
  <button aria-label={label}>
    <Icon>
      <circle cx="8" cy="8" r="7.500" fill="#eceef1" stroke="#666b73" />
      <path d={d} stroke="#444" strokeWidth="2" />
    </Icon>
  </button>
)

const StatusBar: FC = () => (
  <div className="flex h-[22px] shrink-0 items-center border-t border-[#8d929a] bg-linear-to-b from-[#e2e5e9] to-[#b9bdc3] text-[11px] text-[#3a3a3a]">
    <span className="w-[94px] pl-2">Слайд 33 из 37</span>
    <span className="flex h-[18px] w-[132px] items-center border-x border-[#a2a7af] pl-[9px]">"Новая презентация"</span>
    <button className="flex items-center gap-4 pl-[9px]">
      <Icon w={17}>
        <path d="M0 9l8-4 8 4-7 6z" fill="#f6f8fc" stroke="#5a74a8" />
        <path d="M0 9v2l9 5v-2z" fill="#4b68a6" />
        <path d="M5 6l3 4 6-9" fill="none" stroke="#2e6bd0" strokeWidth="2" />
      </Icon>
      русский
    </button>
    <span className="ml-[9px] h-[18px] w-px bg-[#a2a7af]" />
    <span className="ml-auto h-[18px] w-px bg-[#a2a7af]" />
    <div className="flex gap-px pr-2 pl-[3px]">
      <ViewButton active label="Обычный" d="M.5.500h11v10H.5zM4.500.5v10M7 2.500h3v3H7zM4.500 7.500h7" />
      <ViewButton label="Сортировщик" d="M.5.500h4v4h-4zM7.500.5h4v4h-4zM.5 6.500h4v4h-4zM7.500 6.500h4v4h-4z" />
      <ViewButton label="Режим чтения" d="M.5 1.500L6 2.500l5.500-1v8L6 10.500l-5.500-1zM6 2v9M2 4.500h3M2 6.500h3M7 4.500h3M7 6.500h3" />
      <ViewButton label="Показ слайдов" d="M0 .5h12M1.500.5v5h9v-5M6 6v4M3 10.500h6" />
    </div>
    <button className="mr-2">90%</button>
    <ZoomButton label="Уменьшить" d="M4 8h8" />
    <input
      type="range"
      aria-label="Масштаб"
      min={0}
      max={100}
      defaultValue={45}
      className="h-4 w-[100px] appearance-none bg-[linear-gradient(#8b9098,#8b9098)] bg-[length:100%_1px] bg-center bg-no-repeat [&::-webkit-slider-thumb]:h-3 [&::-webkit-slider-thumb]:w-[9px] [&::-webkit-slider-thumb]:appearance-none [&::-webkit-slider-thumb]:rounded-b-full [&::-webkit-slider-thumb]:border [&::-webkit-slider-thumb]:border-[#666b73] [&::-webkit-slider-thumb]:bg-[#eceef1]"
    />
    <ZoomButton label="Увеличить" d="M4 8h8M8 4v8" />
    <button aria-label="Вписать слайд" className="mr-[5px] ml-2">
      <Icon>
        <rect x=".5" y=".5" width="15" height="15" rx="2" fill="#e3e5e8" stroke="#555" />
        <path d="M8 2v4M8 10v4M2 8h4M10 8h4M6.500 3.500h3M6.500 12.500h3M3.500 6.500v3M12.500 6.500v3" stroke="#555" />
      </Icon>
    </button>
  </div>
)

/* ---------- taskbar ---------- */

const Grip: FC = () => (
  <span className="h-8 w-2 bg-[radial-gradient(#777_35%,transparent_45%)] bg-[length:3px_4px]" />
)

const TaskButton: FC<{ label: string; tone?: 'dark' | 'hot' | 'none'; children: ReactNode }> = ({ label, tone = 'none', children }) => {
  const tones = {
    none: 'border-transparent',
    dark: 'border-[#8a8a8a] bg-linear-to-b from-[#777] via-[#3d3d3d] to-[#2b2b2b]',
    hot: 'border-[#f3c4b6] bg-linear-to-br from-[#d9c0bc] via-[#b96f5d] to-[#f3d3c6]',
  }
  return (
    <button aria-label={label} className={`flex h-[38px] w-[58px] items-center justify-center rounded-sm border ${tones[tone]}`}>
      {children}
    </button>
  )
}

const OfficeIcon: FC<{ letter: string; color: string; pale: string }> = ({ letter, color, pale }) => (
  <Icon w={30} h={30}>
    <path d="M6 1h22v28H1V6z" fill={pale} stroke={color} strokeWidth="1.500" />
    <text x="4" y="20" fontSize="20" fontWeight="bold" fill={color} fontFamily="Liberation Serif, serif">{letter}</text>
    <path d="M15 16l14 2-3 10-14-3z" fill="#fff" stroke="#ccc" strokeWidth=".5" />
    <path d="M16 22l8 2M15 25l6 1" stroke={color} strokeWidth="1.500" />
  </Icon>
)

const TaskBar: FC = () => (
  <footer className="flex h-10 shrink-0 items-center border-t border-[#666] bg-[#141414] text-white">
    <button aria-label="Пуск" className="ml-2">
      <Icon w={38} h={38}>
        <defs>
          <radialGradient id="orb" cx="50%" cy="85%" r="80%">
            <stop offset="0" stopColor="#4cc8f4" />
            <stop offset=".5" stopColor="#205f90" />
            <stop offset="1" stopColor="#7799b0" />
          </radialGradient>
        </defs>
        <circle cx="19" cy="19" r="18" fill="url(#orb)" stroke="#8fa6b5" />
        <path d="M11 9c3-2 6-2 8-1l-2 9c-3-1-5-1-8 1z" fill="#ef6529" />
        <path d="M21 9c3 2 6 2 10 0l-2 9c-4 2-7 2-10 0z" fill="#9dcb3b" />
        <path d="M8 20c3-2 5-2 8-1l-2 9c-3-1-5-1-8 1z" fill="#49a3e0" />
        <path d="M18 20c3 2 6 2 10 0l-2 9c-4 2-7 2-10 0z" fill="#fccb2f" />
      </Icon>
    </button>
    <span className="w-3" />
    <Grip />
    <span className="w-[10px]" />
    <div className="flex gap-1">
      <TaskButton label="Почта">
        <span className="bg-linear-to-b from-[#3f74b8] to-[#1c4a90] bg-clip-text pb-1 text-[34px] leading-9 font-bold text-transparent">@</span>
      </TaskButton>
      <TaskButton label="Программа" tone="dark">
        <Icon w={30} h={30}>
          <circle cx="15" cy="15" r="14.500" fill="#f7b52a" />
          <path d="M1 17L22 2c5 2 8 6 8 11L2 21z" fill="#7fd128" />
          <path d="M2 21l28-8c0 3 0 6-1 8L6 27c-2-2-3-3-4-6z" fill="#e2641c" />
          <path d="M6 27l23-6c-3 7-8 9-14 9-4 0-6-1-9-3z" fill="#f7a828" />
        </Icon>
      </TaskButton>
      <TaskButton label="Проводник" tone="dark">
        <Icon w={32} h={30}>
          <path d="M2 3h11l2 3h14v20H2z" fill="#f0d98a" stroke="#c7a850" />
          <path d="M4 1h4v3H4z" fill="#37b24a" />
          <path d="M12 4h4v3h-4z" fill="#e0442c" />
          <path d="M21 5h4v3h-4z" fill="#3aa0e0" />
          <path d="M1 9h30l-1 18H2z" fill="#f9e9ac" stroke="#d6bb62" />
          <path d="M5 29V19c0-2 1-3 3-3h17c2 0 3 1 3 3v10h-5v-7H10v7z" fill="#8ccdf0" stroke="#5b9ec8" />
        </Icon>
      </TaskButton>
      <TaskButton label="Internet Explorer">
        <Icon w={32} h={32}>
          <path d="M28 20H11c1 6 9 7 12 3h5c-4 10-22 9-22-5C6 3 28 2 28 20zM11 15h12c-1-6-11-6-12 0z" fill="#55c0f0" />
          <path d="M4 29C-2 22 20-3 29 2c2 1 2 5 0 8 1-4 0-6-2-6C20 3 2 20 5 27c1 1 3 1 6 0-3 2-5 3-7 2z" fill="#f5c72c" />
        </Icon>
      </TaskButton>
      <TaskButton label="Проигрыватель">
        <Icon w={28} h={28}>
          <path d="M8 2h19v22H8z" fill="#4b93be" />
          <path d="M5 2h19v24H5z" fill="#6db2d8" />
          <path d="M1 2h20v25H1z" fill="#9bd0ec" stroke="#4b93be" />
          <circle cx="11" cy="14" r="9" fill="#f07a20" stroke="#fff" />
          <path d="M8 8.500l8 5.500-8 5.500z" fill="#fff" />
        </Icon>
      </TaskButton>
      <TaskButton label="Firefox">
        <Icon w={32} h={32}>
          <circle cx="17" cy="14" r="12" fill="#2b5fb0" />
          <path d="M15 4c6-2 10 2 11 6-4-1-7 1-9-2z" fill="#7fb4e8" />
          <path d="M3 4c0 3 2 3 5 4 3-3 6-2 7-1-3 1-2 3-4 5 4 0 5 3 2 5 4 5 12 2 12-3 0-3-1-5-2-7 5 2 7 7 7 11 0 18-29 17-29-1C1 11 1 7 3 4z" fill="#ea6a1c" />
          <path d="M28 7c5 7 1 18-8 20 6-5 9-11 8-20z" fill="#f8bd30" />
        </Icon>
      </TaskButton>
      <TaskButton label="Word" tone="dark">
        <OfficeIcon letter="W" color="#1d5cb5" pale="#d8e6fa" />
      </TaskButton>
      <TaskButton label="PowerPoint" tone="hot">
        <OfficeIcon letter="P" color="#d4451a" pale="#fde3d4" />
      </TaskButton>
    </div>
    <div className="ml-auto flex h-full items-center">
      <Grip />
      <button className="ml-3 w-8 text-left text-[11px]">RU</button>
      <button aria-label="Показать скрытые значки" className="mr-[13px]">
        <Icon w={7} h={4}>
          <path d="M0 4h7L3.500 0z" fill="#fff" />
        </Icon>
      </button>
      <div className="flex items-center gap-[9px]">
        <Icon w={15}>
          <path d="M1.500 1v14" stroke="#fff" />
          <path d="M2 2h5l1 1h6v7H8L7 9H2z" fill="#eee" />
          <circle cx="10.500" cy="10.500" r="4.500" fill="#d8281c" />
          <path d="M8.500 8.500l4 4M12.500 8.500l-4 4" stroke="#fff" strokeWidth="1.500" />
        </Icon>
        <Icon w={15}>
          <path d="M4.500 4.500h10v7h-10zM9.500 12v2M6 14.500h7M.5 1v3h3V1M2 4v8h2" fill="none" stroke="#fff" strokeWidth="1.200" />
        </Icon>
        <Icon w={15}>
          <path d="M0 5h3l4-4v14l-4-4H0z" fill="#fff" />
          <path d="M9 5.500c1 1 1 4 0 5M11 3.500c2 2 2 7 0 9M13 2c3 3 3 9 0 12" fill="none" stroke="#ddd" />
        </Icon>
      </div>
      <button className="ml-[20px] w-[58px] text-center text-[11px] leading-[17px]">
        15:26
        <br />
        27.05.2013
      </button>
      <button aria-label="Свернуть все окна" className="ml-[9px] h-full w-[14px] border border-[#6c6c6c] bg-linear-to-b from-[#555] to-[#111]" />
    </div>
  </footer>
)

export default function App() {
  return (
    <div className="flex h-screen flex-col overflow-hidden bg-[#c3c7cc] font-['Noto_Sans',sans-serif]">
      <div className="shrink-0 bg-[linear-gradient(90deg,#a9abad_0,#b5b5b5_100px,rgba(180,180,180,0)_135px,rgba(180,180,180,0)_calc(100%_-_110px),#a8a8a8_calc(100%_-_80px)),linear-gradient(#54201f_0,#8d3437_6px,#9c4a4c_14px,#cfaeb0_22px,#efefef_30px,#e9e9e9)] bg-[length:100%_24px,100%_100%] bg-no-repeat">
        <TitleBar />
        <RibbonTabs />
      </div>
      <div className="flex h-[87px] shrink-0 border-t border-[#b5b9c0] bg-linear-to-b from-white via-[#f8f9fb] to-[#e6e8ed]">
        <Clipboard />
        <Slides />
        <FontGroup />
        <Paragraph />
        <Drawing />
        <Editing />
      </div>
      <div className="h-[3px] shrink-0 border-t border-[#83878f] bg-[#b3b7bc]" />
      <div className="flex min-h-0 flex-1 bg-[#e7e9ee]">
        <SlidePane />
        <Workspace />
      </div>
      <StatusBar />
      <TaskBar />
    </div>
  )
}
